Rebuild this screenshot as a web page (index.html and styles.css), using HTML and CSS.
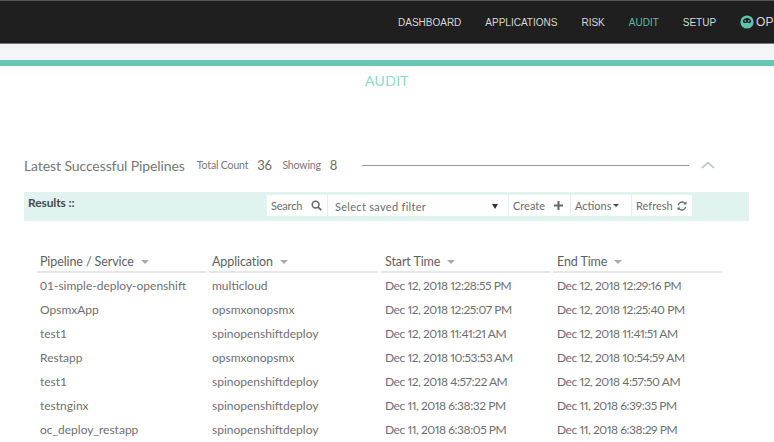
FILE: index.html
```html
<!DOCTYPE html>
<html lang="en">
<head>
<meta charset="utf-8">
<title>Audit</title>
<link rel="stylesheet" href="styles.css">
</head>
<body>
<header class="topbar">
  <nav class="nav">
    <a class="nav-link">DASHBOARD</a>
    <a class="nav-link">APPLICATIONS</a>
    <a class="nav-link">RISK</a>
    <a class="nav-link active">AUDIT</a>
    <a class="nav-link">SETUP</a>
    <a class="nav-link user">
      <svg class="user-icon" width="14" height="14" viewBox="0 0 14 14"><circle cx="7" cy="7" r="6.6" fill="#5cc4ad"/><path d="M2.8 6.6C3 4 5 2.9 7 2.9s4 1.100 4.200 3.700c-.6 1.300-1.500 1.700-2.300 1.500C8 7.800 7.500 7.400 7 7.400s-1 .4-1.900.7c-.8.200-1.700-.2-2.300-1.500z" fill="#1f1f1f"/><circle cx="5.200" cy="5.900" r=".8" fill="#5cc4ad"/><circle cx="8.800" cy="5.900" r=".8" fill="#5cc4ad"/></svg>
      OP
    </a>
  </nav>
</header>
<div class="strip"></div>
<main class="panel">
  <h1 class="title">AUDIT</h1>
  <section class="summary">
    <h2 class="summary-title">Latest Successful Pipelines</h2>
    <span class="summary-label">Total Count</span>
    <span class="summary-num">36</span>
    <span class="summary-label">Showing</span>
    <span class="summary-num">8</span>
    <span class="summary-rule"></span>
    <svg class="chevron" width="14" height="8" viewBox="0 0 14 8"><path d="M1 7l6-5.500L13 7" fill="none" stroke="#b9bdbd" stroke-width="1.500"/></svg>
  </section>
  <section class="toolbar">
    <strong class="results">Results ::</strong>
    <div class="tools">
      <div class="tool tool-search">Search
        <svg width="11" height="11" viewBox="0 0 11 11"><circle cx="4.600" cy="4.600" r="3.400" fill="none" stroke="#666" stroke-width="1.500"/><path d="M7.200 7.200l3 3" stroke="#666" stroke-width="1.800"/></svg>
      </div>
      <div class="tool tool-filter"><span class="filter-text">Select saved filter</span><span class="caret-dark"></span></div>
      <div class="tool tool-create">Create
        <svg width="9" height="9" viewBox="0 0 9 9"><path d="M4.500 0v9M0 4.500h9" stroke="#666" stroke-width="2"/></svg>
      </div>
      <div class="tool tool-actions">Actions<span class="caret-small"></span></div>
      <div class="tool tool-refresh">Refresh
        <svg width="10" height="10" viewBox="0 0 10 10"><path d="M1.200 4.200A3.900 3.900 0 0 1 8 2.400M8.800 5.800A3.900 3.900 0 0 1 2 7.600" fill="none" stroke="#666" stroke-width="1.300"/><path d="M9.500 .4v3.200H6.300zM.5 9.600V6.400h3.200z" fill="#666"/></svg>
      </div>
    </div>
  </section>
  <table class="grid">
    <thead>
      <tr>
        <th><span class="th-inner">Pipeline / Service<span class="sort"></span></span></th>
        <th><span class="th-inner">Application<span class="sort"></span></span></th>
        <th class="th-date"><span class="th-inner">Start Time<span class="sort"></span></span></th>
        <th class="th-date"><span class="th-inner">End Time<span class="sort"></span></span></th>
      </tr>
    </thead>
    <tbody>
      <tr><td>01-simple-deploy-openshift</td><td>multicloud</td><td class="date">Dec 12, 2018 12:28:55 PM</td><td class="date">Dec 12, 2018 12:29:16 PM</td></tr>
      <tr><td>OpsmxApp</td><td>opsmxonopsmx</td><td class="date">Dec 12, 2018 12:25:07 PM</td><td class="date">Dec 12, 2018 12:25:40 PM</td></tr>
      <tr><td>test1</td><td>spinopenshiftdeploy</td><td class="date">Dec 12, 2018 11:41:21 AM</td><td class="date">Dec 12, 2018 11:41:51 AM</td></tr>
      <tr><td>Restapp</td><td>opsmxonopsmx</td><td class="date">Dec 12, 2018 10:53:53 AM</td><td class="date">Dec 12, 2018 10:54:59 AM</td></tr>
      <tr><td>test1</td><td>spinopenshiftdeploy</td><td class="date">Dec 12, 2018 4:57:22 AM</td><td class="date">Dec 12, 2018 4:57:50 AM</td></tr>
      <tr><td>testnginx</td><td>spinopenshiftdeploy</td><td class="date">Dec 11, 2018 6:38:32 PM</td><td class="date">Dec 11, 2018 6:39:35 PM</td></tr>
      <tr><td>oc_deploy_restapp</td><td>spinopenshiftdeploy</td><td class="date">Dec 11, 2018 6:38:05 PM</td><td class="date">Dec 11, 2018 6:38:29 PM</td></tr>
    </tbody>
  </table>
</main>
</body>
</html>
```
FILE: styles.css
```css
* { box-sizing: border-box; }
html, body { margin: 0; height: 100%; }
body {
  width: 774px;
  height: 442px;
  overflow: hidden;
  background: #fff;
  font-family: "Lato", "Liberation Sans", sans-serif;
  color: #6b6b6b;
}
.topbar {
  height: 44px;
  background: #1f1f1f;
  border-top: 1px solid #555;
  border-bottom: 1px solid #777;
  overflow: hidden;
}
.nav {
  display: flex;
  align-items: center;
  gap: 24px;
  height: 42px;
  padding-left: 398px;
  white-space: nowrap;
}
.nav-link {
  font-family: "Liberation Sans", Arial, sans-serif;
  font-size: 10px;
  color: #d6d6d6;
}
.nav-link.active { color: #5fb8a4; }
.user { display: flex; align-items: center; gap: 2px; font-size: 12px; }
.strip { height: 16px; background: #f4f5f7; }
.panel { border-top: 6px solid #66c8b4; padding: 0 24px; }
.title {
  margin: 0;
  padding-top: 6px;
  height: 31px;
  text-align: center;
  font-size: 14px;
  line-height: 17px;
  font-weight: 400;
  color: #8ed8c8;
  letter-spacing: .3px;
}
.summary {
  display: flex;
  align-items: center;
  height: 24px;
  margin-top: 56px;
  white-space: nowrap;
}
.summary-title { margin: 0 12px 0 0; font-size: 14px; font-weight: 400; letter-spacing: -.1px; color: #777; }
.summary-label { font-size: 10.500px; margin-right: 9px; color: #777; letter-spacing: -.15px; }
.summary-num { font-size: 13px; margin-right: 11px; color: #6b6b6b; font-variant-numeric: proportional-nums; letter-spacing: -.4px; }
.summary-rule { flex: 0 0 327px; height: 1px; margin-left: 14px; background: #999; }
.chevron { margin-left: 12px; }
.toolbar {
  display: flex;
  height: 29px;
  margin-top: 15px;
  width: 725px;
  background: #e0f3ef;
}
.results { margin: 3px 0 0 4px; font-size: 12px; line-height: 15px; font-weight: 700; color: #4a4a4a; width: 239px; letter-spacing: -.1px; }
.tools { display: flex; gap: 1px; margin-top: 3px; height: 21px; }
.tool {
  display: flex;
  align-items: center;
  justify-content: space-between;
  height: 21px;
  padding: 0 4px;
  background: #fff;
  font-size: 11px;
  color: #6b6b6b;
}
.tool-search { width: 60px; padding-right: 5px; letter-spacing: -.2px; }
.tool-filter { width: 180px; padding: 2px 10px 0 7px; letter-spacing: .3px; }
.tool-create { width: 61px; padding-right: 7px; }
.tool-actions { width: 60px; justify-content: flex-start; }
.tool-refresh { width: 60px; padding-right: 5px; }
.caret-dark { width: 0; height: 0; border: 3px solid transparent; border-top: 5px solid #333; border-bottom: 0; }
.caret-small { width: 0; height: 0; margin-left: 2px; border: 3px solid transparent; border-top: 3px solid #444; border-bottom: 0; }
.grid {
  width: 691px;
  margin-top: 23px;
  margin-left: 10px;
  border-collapse: separate;
  border-spacing: 3px 0;
  table-layout: fixed;
}
.grid th {
  height: 29px;
  padding: 8px 0 0 3px;
  text-align: left;
  font-size: 12.500px;
  font-weight: 400;
  color: #5f5f5f;
  border-bottom: 2px solid #e6e6e6;
  letter-spacing: -.1px;
}
.grid th.th-date { padding-left: 4px; }
.th-inner { display: inline-flex; align-items: center; }
.sort { width: 0; height: 0; margin-left: 7px; border: 4px solid transparent; border-top: 4px solid #aaa; border-bottom: 0; }
.grid td {
  height: 24px;
  padding: 1px 0 0 3px;
  font-size: 12px;
  color: #6f6f6f;
  white-space: nowrap;
}
.grid td.date { padding-left: 4px; font-variant-numeric: proportional-nums; letter-spacing: -.45px; }
```
